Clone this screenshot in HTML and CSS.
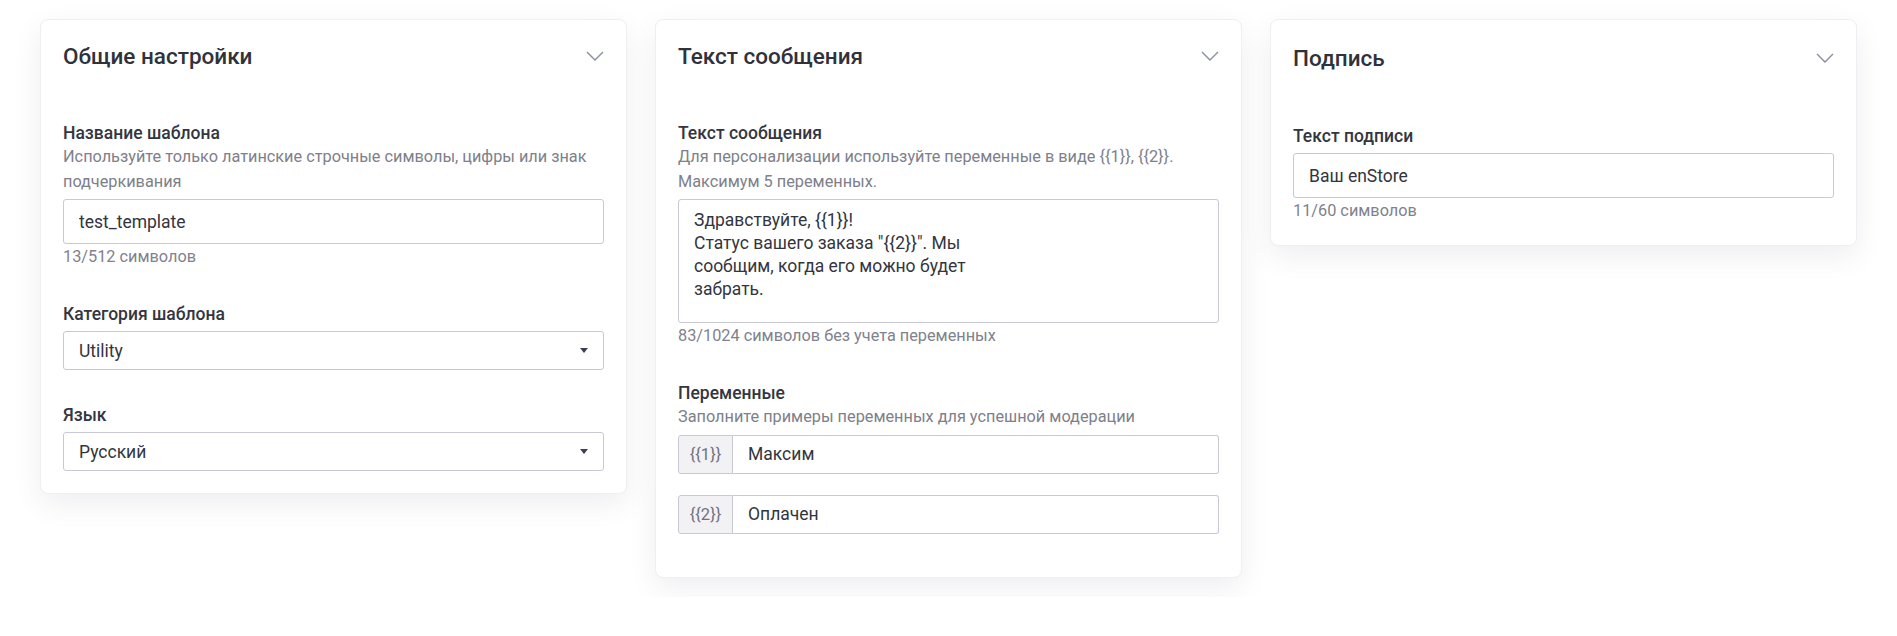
FILE: index.html
```html
<!DOCTYPE html>
<html lang="ru">
<head>
  <meta charset="UTF-8">
  <title>Шаблон сообщения</title>
  <link rel="stylesheet" href="styles.css">
</head>
<body>

  <div class="cards">

    <section class="card">
      <div class="card-head">
        <h2>Общие настройки</h2>
        <svg class="chevron" width="18" height="10" viewBox="0 0 18 10"><path d="M1 1 L9 9 L17 1" /></svg>
      </div>
      <div class="card-body">
        <div class="field">
          <label>Название шаблона</label>
          <div class="hint">Используйте только латинские строчные символы, цифры или знак подчеркивания</div>
          <input class="control" type="text" value="test_template" />
          <div class="counter">13/512 символов</div>
        </div>
        <div class="field">
          <label>Категория шаблона</label>
          <div class="control select">Utility <span class="caret"></span></div>
        </div>
        <div class="field">
          <label>Язык</label>
          <div class="control select">Русский <span class="caret"></span></div>
        </div>
      </div>
    </section>

    <section class="card">
      <div class="card-head">
        <h2>Текст сообщения</h2>
        <svg class="chevron" width="18" height="10" viewBox="0 0 18 10"><path d="M1 1 L9 9 L17 1" /></svg>
      </div>
      <div class="card-body">
        <div class="field">
          <label>Текст сообщения</label>
          <div class="hint">Для персонализации используйте переменные в виде {{1}}, {{2}}.<br>Максимум 5 переменных.</div>
          <textarea class="control">Здравствуйте, {{1}}!
Статус вашего заказа "{{2}}". Мы
сообщим, когда его можно будет
забрать.</textarea>
          <div class="counter">83/1024 символов без учета переменных</div>
        </div>
        <div class="field">
          <label>Переменные</label>
          <div class="hint">Заполните примеры переменных для успешной модерации</div>
          <div class="var-row">
            <span class="var-name">{{1}}</span>
            <input type="text" value="Максим" />
          </div>
          <div class="var-row">
            <span class="var-name">{{2}}</span>
            <input type="text" value="Оплачен" />
          </div>
        </div>
      </div>
    </section>

    <section class="card">
      <div class="card-head sign-head">
        <h2>Подпись</h2>
        <svg class="chevron" width="18" height="10" viewBox="0 0 18 10"><path d="M1 1 L9 9 L17 1" /></svg>
      </div>
      <div class="card-body">
        <div class="field">
          <label>Текст подписи</label>
          <input class="control" type="text" value="Ваш enStore" />
          <div class="counter">11/60 символов</div>
        </div>
      </div>
    </section>

  </div>

</body>
</html>
```

FILE: styles.css
```css
body {
  margin: 0;
  padding: 19px 40px;
  background: #fff;
  font-family: Roboto, "Liberation Sans", sans-serif;
  color: #33353e;
}

.cards {
  display: grid;
  grid-template-columns: repeat(3, 1fr);
  gap: 28px;
  align-items: start;
}

.card {
  background: #fff;
  border: 1px solid #efeff3;
  border-radius: 8px;
  box-shadow: 0 10px 30px rgba(20, 20, 50, 0.07);
  padding: 0 22px 22px;
}

.card-head {
  height: 72px;
  display: flex;
  align-items: center;
  justify-content: space-between;
}

.sign-head {
  height: 75px;
}

.card-head h2 {
  margin: 0;
  font-size: 22.5px;
  font-weight: 500;
  color: #30323b;
}

.chevron {
  fill: none;
  stroke: #8a8ea0;
  stroke-width: 1.4;
}

.card-body {
  padding-top: 29px;
}

.field {
  margin-bottom: 33px;
}

.field:last-child {
  margin-bottom: 0;
}

.field label {
  display: block;
  font-size: 17.5px;
  line-height: 24px;
  font-weight: 500;
  color: #34363f;
}

.hint {
  font-size: 16.3px;
  line-height: 24.5px;
  color: #7e808a;
}

.control {
  display: block;
  box-sizing: border-box;
  width: 100%;
  margin-top: 5px;
  padding: 0 15px;
  border: 1px solid #c9c8d7;
  border-radius: 3px;
  font-family: inherit;
  font-size: 17.5px;
  color: #33353e;
  background: #fff;
  outline: none;
}

input.control {
  height: 45px;
}

.select {
  height: 39px;
  display: flex;
  align-items: center;
  justify-content: space-between;
}

.caret {
  width: 0;
  height: 0;
  border-left: 4.5px solid transparent;
  border-right: 4.5px solid transparent;
  border-top: 5px solid #3d4050;
}

textarea.control {
  height: 124px;
  padding-top: 9px;
  line-height: 23px;
  resize: none;
}

.counter {
  margin-top: 1px;
  font-size: 16.3px;
  line-height: 24px;
  color: #80828c;
}

.var-row {
  display: flex;
  height: 39px;
  margin-top: 5px;
  margin-bottom: 21px;
}

.var-row + .var-row {
  margin-top: 0;
}

.var-name {
  width: 55px;
  box-sizing: border-box;
  display: flex;
  align-items: center;
  justify-content: center;
  background: #f2f2f5;
  border: 1px solid #c9c8d7;
  border-radius: 3px 0 0 3px;
  font-size: 16.5px;
  color: #6f7180;
}

.var-row input {
  flex: 1;
  min-width: 0;
  box-sizing: border-box;
  height: 39px;
  padding: 0 15px;
  border: 1px solid #c9c8d7;
  border-left: none;
  border-radius: 0 3px 3px 0;
  font-family: inherit;
  font-size: 17.5px;
  color: #33353e;
  outline: none;
}
```
